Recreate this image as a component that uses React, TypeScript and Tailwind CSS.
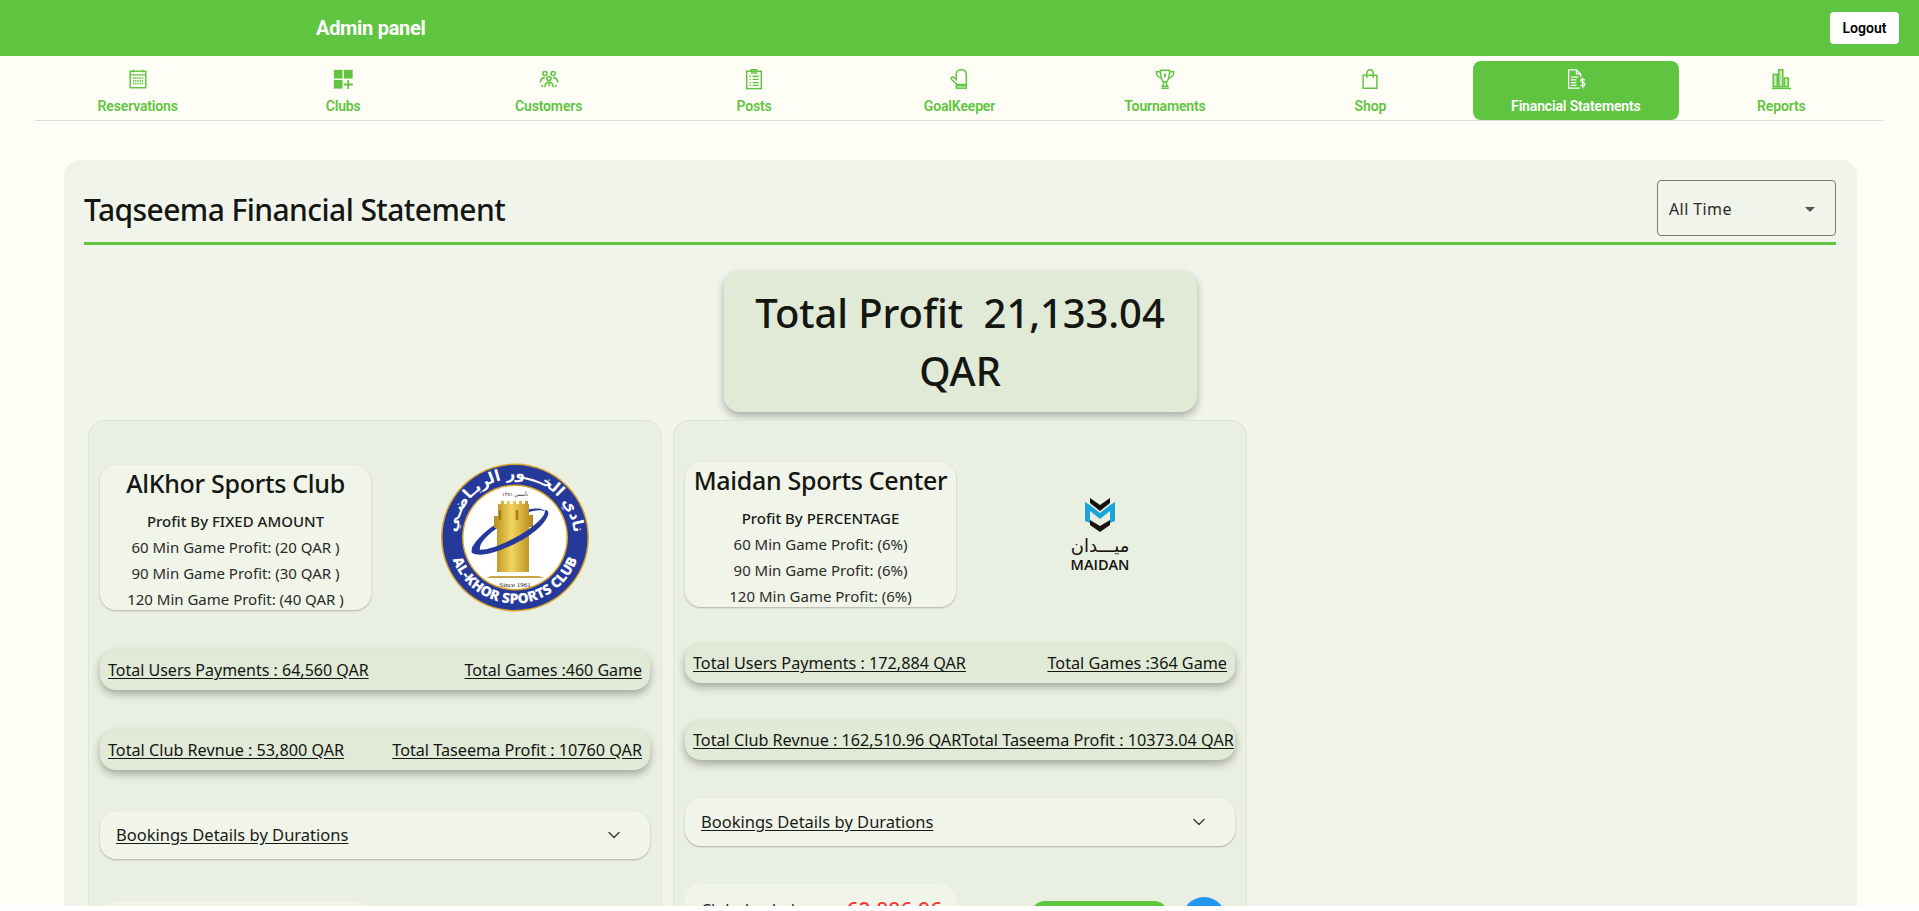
import React from 'react';
import { ChevronDown } from 'lucide-react';

const ubuntu = 'font-["Noto_Sans",sans-serif]';

const iconProps = {
  width: 22,
  height: 22,
  viewBox: '0 0 24 24',
  fill: 'none',
  stroke: 'currentColor',
  strokeWidth: 1.6,
};

const CalendarIcon = () => (
  <svg {...iconProps}>
    <rect x="3.5" y="3.5" width="17" height="18" />
    <path d="M3.5 7.5h17M7 1.8v3M17 1.8v3" />
    <path d="M6.5 11h11M6.5 14h11M6.5 17h11" strokeWidth="2" strokeDasharray="1.4 1" />
  </svg>
);

const ClubsIcon = () => (
  <svg {...iconProps} stroke="none" fill="currentColor">
    <rect x="2" y="2" width="9.5" height="9.5" />
    <rect x="13" y="2" width="9.5" height="9.5" />
    <rect x="2" y="13" width="9.5" height="9.5" />
    <path d="M16.7 13h2v4h4v2h-4v4h-2v-4h-4v-2h4z" />
  </svg>
);

const CustomersIcon = () => (
  <svg {...iconProps} strokeWidth="1.7">
    <circle cx="7.5" cy="6" r="2.2" />
    <circle cx="16.5" cy="6" r="2.2" />
    <circle cx="12" cy="11.500" r="2.300" />
    <path d="M2.500 16c.2-3.500 2-5.500 5-5.500M21.500 16c-.2-3.500-2-5.500-5-5.500" />
    <path d="M7.500 21c0-3.500 1.800-5.500 4.500-5.500s4.500 2 4.500 5.500" />
    <path d="M3.500 18.500 5.500 20.500M20.500 18.500 18.500 20.500M12 16v4" />
  </svg>
);

const PostsIcon = () => (
  <svg {...iconProps}>
    <rect x="4" y="3.500" width="16" height="19" />
    <path d="M9 3.500V2h6v1.500M8.500 5.500h7" />
    <path d="M7 9h1.500M10.500 9H17M7 12.500h1.500M10.500 12.500H17M7 16h1.500M10.500 16H17M7 19h1.500M10.500 19H17" strokeWidth="1.400" />
  </svg>
);

const GloveIcon = () => (
  <svg {...iconProps}>
    <path d="M9 17 4.200 12.800c-1.300-1.200-.6-3 1-3 .9 0 1.600.5 2.300 1.300L9 12.500V6.500C9 3.500 11.500 2 14.500 2 18 2 20 4 20 7.500V18H9z" />
    <rect x="9" y="19.500" width="11" height="2.500" />
  </svg>
);

const TrophyIcon = () => (
  <svg {...iconProps}>
    <path d="M7 2.500h10c0 6-.8 10-3 12.500h-4C7.800 12.500 7 8.500 7 2.500z" />
    <path d="M7 4H2.500c0 4 1.800 6 5.500 7M17 4h4.500c0 4-1.800 6-5.500 7" />
    <path d="M10.500 15v2.500L9 20h6l-1.500-2.500V15M8 22h8" />
    <path d="M12 6v4" strokeWidth="2" />
  </svg>
);

const BagIcon = () => (
  <svg {...iconProps}>
    <path d="M4.500 8h15v14h-15z" />
    <path d="M8.500 11V5.500C8.500 3.500 10 2 12 2s3.500 1.500 3.500 3.500V11" />
  </svg>
);

const StatementIcon = () => (
  <svg {...iconProps} strokeWidth="1.400">
    <path d="M16 22H4V2h8.500L17 6.500V10" />
    <path d="M12.500 2v4.500H17" />
    <path d="M6.500 10h8M6.500 13h6M6.500 16h6M6.500 19h6" />
    <path d="M21.500 13.500c-.5-1-1.500-1.300-2.300-1.300-1 0-2 .6-2 1.700 0 2.400 4.500 1.300 4.500 3.900 0 1.200-1.100 1.800-2.200 1.800-1 0-2-.4-2.500-1.400M19.300 10.500v11.500" />
  </svg>
);

const ReportsIcon = () => (
  <svg {...iconProps}>
    <path d="M2 22.300h21" />
    <rect x="3.500" y="7" width="4.500" height="13.500" fill="currentColor" fillOpacity="0.35" />
    <rect x="9.500" y="2" width="4.500" height="18.500" fill="currentColor" fillOpacity="0.35" />
    <rect x="15.500" y="11" width="4.500" height="9.500" fill="currentColor" fillOpacity="0.35" />
  </svg>
);

const navItems = [
  { label: 'Reservations', icon: <CalendarIcon /> },
  { label: 'Clubs', icon: <ClubsIcon /> },
  { label: 'Customers', icon: <CustomersIcon /> },
  { label: 'Posts', icon: <PostsIcon /> },
  { label: 'GoalKeeper', icon: <GloveIcon /> },
  { label: 'Tournaments', icon: <TrophyIcon /> },
  { label: 'Shop', icon: <BagIcon /> },
  { label: 'Financial Statements', icon: <StatementIcon />, active: true },
  { label: 'Reports', icon: <ReportsIcon /> },
];

const AlKhorLogo = () => (
  <svg width="148" height="149" viewBox="0 0 148 149">
    <defs>
      <linearGradient id="tower" x1="0" x2="1" y1="0" y2="0">
        <stop offset="0" stopColor="#b98d1c" />
        <stop offset="0.45" stopColor="#f2d55e" />
        <stop offset="1" stopColor="#b4861a" />
      </linearGradient>
      <path id="arcTop" d="M15 74.500A59 59 0 0 1 133 74.500" />
      <path id="arcBottom" d="M8 74.500A66 66 0 0 0 140 74.500" />
    </defs>
    <circle cx="74" cy="74.500" r="74" fill="#d7a52b" />
    <circle cx="74" cy="74.500" r="72.500" fill="#25399a" />
    <circle cx="74" cy="74.500" r="53" fill="#d7a52b" />
    <circle cx="74" cy="74.500" r="51.500" fill="#ffffff" />
    <path d="M31 90c-3-7 12-22 30-33 18-10 38-15 43-9-8-3-24 2-40 12-15 9-27 20-25 27z" fill="#25399a" />
    <path d="M57 44v-3h3v-3h3v3h3v-3h3v3h3v-3h3v3h3v-3h3v3h3v-3h3v3h1v11h4v12h-4v45H56V65h-3V53h4z" fill="url(#tower)" />
    <path d="M50 113h48l5 2H45z" fill="#c9a545" />
    <path d="M59 47v10M76 47v10" stroke="#a67c17" strokeWidth="2.500" />
    <path d="M31 90c10 5 30-2 50-13 14-8 24-18 26-25 1-3 0-5-3-5 1 6-10 16-25 25-20 11-36 17-45 14-2-1-3-2-3-4z" fill="#25399a" />
    <text fontFamily='"DejaVu Sans", sans-serif' fontSize="15.500" fill="#ffffff" fontWeight="700">
      <textPath href="#arcTop" startOffset="50%" textAnchor="middle">نادي الخـــور الريـاضـي</textPath>
    </text>
    <text fontFamily='"Open Sans", sans-serif' fontSize="14" fontWeight="800" fill="#ffffff">
      <textPath href="#arcBottom" startOffset="50%" textAnchor="middle">AL-KHOR SPORTS CLUB</textPath>
    </text>
    <text x="74" y="124" textAnchor="middle" fontFamily='"Liberation Serif", serif' fontSize="7" fill="#222222">Since 1961</text>
    <text x="74" y="33" textAnchor="middle" fontFamily='"DejaVu Sans", sans-serif' fontSize="5" fill="#222222">تأسس ١٣٨١</text>
  </svg>
);

const MaidanLogo = () => (
  <svg width="64" height="74" viewBox="0 0 64 74">
    <path d="M22 0l10 7 10-7v5L32 13 22 5z" fill="#15120f" />
    <path d="M17 4l5 3 10 8 10-8 5-3v19l-5 2V13l-10 8-10-8v12l-5-2z" fill="#19a4dc" />
    <path d="M22 22l10 6 10-6v5l-10 7-10-7z" fill="#15120f" />
    <text x="32" y="54" textAnchor="middle" fontFamily='"DejaVu Sans", sans-serif' fontSize="18" fill="#15120f">ميـــدان</text>
    <text x="32" y="72" textAnchor="middle" fontFamily='"Open Sans", sans-serif' fontSize="14.500" fontWeight="600" fill="#15120f">MAIDAN</text>
  </svg>
);

const StatRow = ({ left, right, className }: { left: string; right: string; className: string }) => (
  <div className={`flex items-center justify-between rounded-2xl bg-[#e1e9d7] px-2 text-[16.2px] text-[#141612] underline underline-offset-2 shadow-[0_4px_8px_rgba(0,0,0,0.3)] whitespace-nowrap ${className}`}>
    <span>{left}</span>
    <span>{right}</span>
  </div>
);

const BookingsRow = ({ className }: { className: string }) => (
  <div className={`flex h-12 items-center justify-between rounded-2xl bg-[#f0f4e9] pl-4 pr-[26px] text-[16.5px] text-[#1a1c18] underline underline-offset-2 shadow-[0_1px_2px_rgba(0,0,0,0.25)] ${className}`}>
    <span>Bookings Details by Durations</span>
    <ChevronDown size={20} strokeWidth={1.8} className="text-[#444]" />
  </div>
);

const ProfitBox = ({ name, kind, lines }: { name: string; kind: string; lines: string[] }) => (
  <div className="h-[145px] w-[271px] shrink-0 overflow-hidden rounded-2xl bg-[#f0f4e9] text-center shadow-[0_1px_2px_rgba(0,0,0,0.25)]">
    <h3 className="text-[25px] leading-[36px] font-medium tracking-[-0.3px] whitespace-nowrap text-[#141612]">{name}</h3>
    <p className="mt-[7px] text-[15px] leading-[26px] font-medium text-[#1a1c18]">{kind}</p>
    {lines.map((line) => (
      <p key={line} className="text-[15px] leading-[26px] whitespace-nowrap text-[#2a2c28]">{line}</p>
    ))}
  </div>
);

const App = () => {
  return (
    <div className={`h-[906px] overflow-hidden bg-[#fefef6] ${ubuntu}`}>
      <header className="flex h-14 items-center justify-between bg-[#5fc43f] pr-5 pl-[316px] font-['Roboto',sans-serif]">
        <span className="text-[20px] font-bold tracking-[-0.3px] text-white">Admin panel</span>
        <button className="h-8 w-[69px] rounded bg-white text-[14px] font-semibold text-black">Logout</button>
      </header>

      <nav className="mx-[35px] mt-[5px] grid h-[60px] grid-cols-9 border-b border-[#dddddd] font-['Roboto',sans-serif]">
        {navItems.map((item) => (
          <a
            key={item.label}
            className={`flex flex-col items-center justify-start rounded-t-lg pt-[7px] text-[14px] leading-[20px] font-semibold tracking-[-0.15px] ${item.active ? 'rounded-b-lg bg-[#5fc43f] text-white' : 'text-[#5fc43f]'}`}
          >
            {item.icon}
            <span className="mt-[6px]">{item.label}</span>
          </a>
        ))}
      </nav>

      <main className="mx-16 mt-[39px] h-[900px] w-[1793px] rounded-2xl bg-[#f0f4ea] pt-5 pr-[21px] pl-5">
        <div className="flex h-[65px] items-start justify-between border-b-[3px] border-[#5fc43f]">
          <h1 className="mt-2 text-[30px] leading-[44px] font-medium tracking-[-0.57px] text-[#141612]">Taqseema Financial Statement</h1>
          <div className="relative flex h-14 w-[179px] items-center rounded border border-[#77796f] pt-[2px] pl-[11px] text-[16px] tracking-[0.4px] text-[#2a2c28]">
            All Time
            <span className="absolute top-[26px] right-5 h-0 w-0 border-x-[5px] border-t-[5px] border-x-transparent border-t-[#555]" />
          </div>
        </div>

        <div className="mx-auto mt-[26px] h-[141px] w-[473px] rounded-2xl bg-[#e1e9d7] pt-[13px] text-center text-[40px] leading-[58px] font-medium tracking-[-0.1px] text-[#141612] shadow-[0_4px_8px_rgba(0,0,0,0.3)]">
          <p className="whitespace-pre-wrap">Total Profit  21,133.04 QAR</p>
        </div>

        <div className="mt-2 ml-1 flex gap-[11px]">
          <section className="h-[600px] w-[574px] rounded-2xl border border-[#dfe5d5] bg-[#e9efe1] px-[11px] pt-[42px]">
            <div className="flex h-[149px] items-center">
              <ProfitBox
                name="AlKhor Sports Club"
                kind="Profit By FIXED AMOUNT"
                lines={['60 Min Game Profit: (20 QAR )', '90 Min Game Profit: (30 QAR )', '120 Min Game Profit: (40 QAR )']}
              />
              <div className="ml-[70px]">
                <AlKhorLogo />
              </div>
            </div>
            <StatRow className="mt-[38px] h-10 text-[16px]" left="Total Users Payments : 64,560 QAR" right="Total Games :460 Game" />
            <StatRow className="mt-10 h-10" left="Total Club Revnue : 53,800 QAR" right="Total Taseema Profit : 10760 QAR" />
            <BookingsRow className="mt-[41px]" />
            <div className="mt-[42px] flex items-start">
              <div className="h-[70px] w-[271px] rounded-2xl bg-[#f0f4e9]" />
              <span className="mt-[5px] ml-[222px] h-11 w-11 rounded-full bg-[#2196f3]" />
            </div>
          </section>

          <section className="h-[600px] w-[574px] rounded-2xl border border-[#dfe5d5] bg-[#e9efe1] px-[11px] pt-[41px]">
            <div className="flex h-[145px] items-center">
              <ProfitBox
                name="Maidan Sports Center"
                kind="Profit By PERCENTAGE"
                lines={['60 Min Game Profit: (6%)', '90 Min Game Profit: (6%)', '120 Min Game Profit: (6%)']}
              />
              <div className="ml-[112px]">
                <MaidanLogo />
              </div>
            </div>
            <StatRow className="mt-[37px] h-[39px]" left="Total Users Payments : 172,884 QAR" right="Total Games :364 Game" />
            <StatRow className="mt-[38px] h-[39px]" left="Total Club Revnue : 162,510.96 QAR" right="Total Taseema Profit : 10373.04 QAR" />
            <BookingsRow className="mt-[38px]" />
            <div className="mt-[38px] flex items-start">
              <div className="flex h-[70px] w-[271px] items-start justify-between rounded-2xl bg-[#f0f4e9] pt-[14px] pr-[14px] pl-4 text-[16px] leading-[24px] text-[#2a2c28]">
                <span>Club due balance :</span>
                <span className="text-[21px] font-medium text-[#f03a3a]">62,886.96</span>
              </div>
              <span className="mt-[17px] ml-[75px] h-10 w-[137px] rounded-[14px] bg-[#5fc43f]" />
              <span className="mt-[13px] ml-[14px] h-11 w-11 rounded-full bg-[#2196f3]" />
            </div>
          </section>
        </div>
      </main>
    </div>
  );
};

export default App;
